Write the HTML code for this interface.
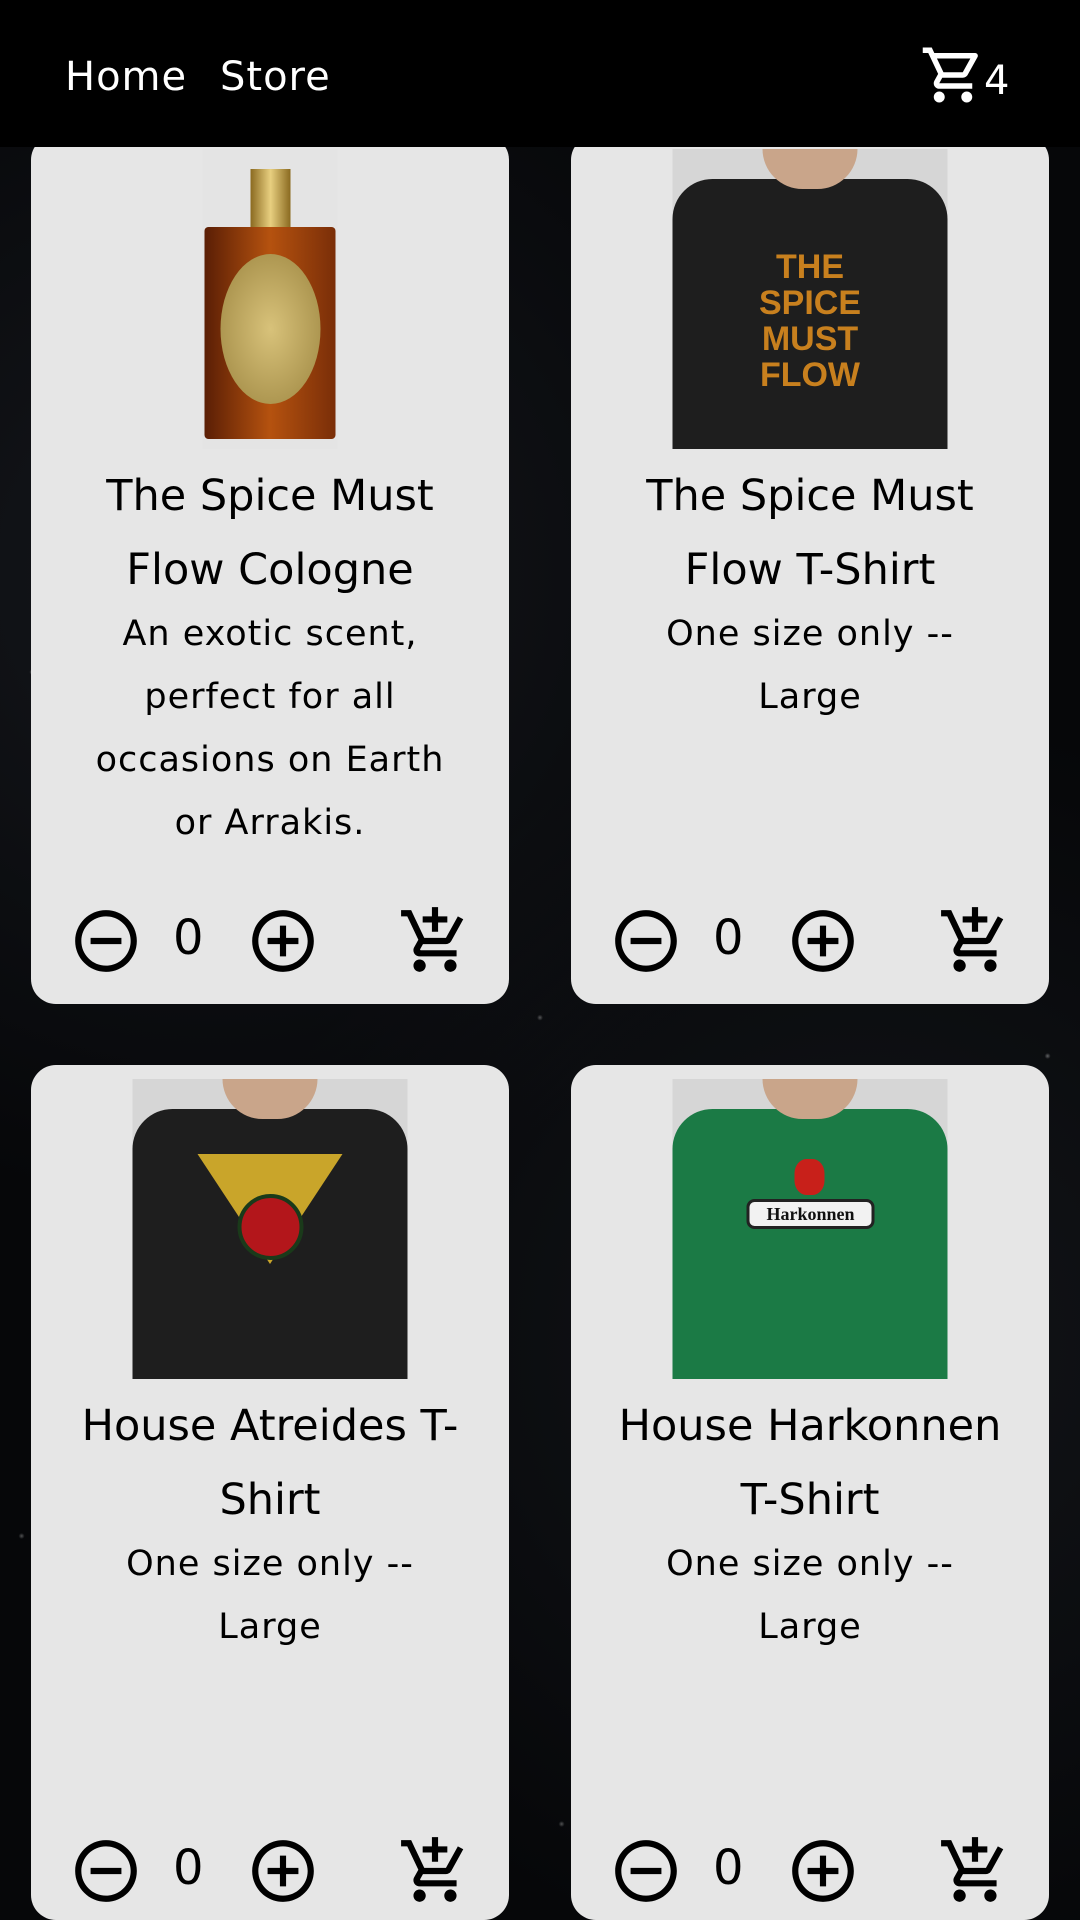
<!DOCTYPE html>
<html><head><meta charset="utf-8">
<style>
*{margin:0;padding:0;box-sizing:border-box}
html,body{width:1080px;height:1920px;overflow:hidden;background:#050608;font-family:"DejaVu Sans","Liberation Sans",sans-serif;color:#000;position:relative}
.stars{position:absolute;left:0;top:0;width:1080px;height:1920px;background:
radial-gradient(circle at 3% 35%,rgba(255,255,255,.35) 0,transparent 3px),
radial-gradient(circle at 97% 55%,rgba(255,255,255,.35) 0,transparent 3px),
radial-gradient(circle at 50% 53%,rgba(255,255,255,.3) 0,transparent 3px),
radial-gradient(circle at 52% 95%,rgba(255,255,255,.3) 0,transparent 3px),
radial-gradient(circle at 2% 80%,rgba(255,255,255,.3) 0,transparent 3px),
radial-gradient(circle at 20% 30%,#15171c 0,transparent 40%),
radial-gradient(circle at 80% 70%,#131519 0,transparent 40%),#060709}
.nav{position:absolute;left:0;top:0;width:1080px;height:147px;background:#000;z-index:5}
.nav a{position:absolute;top:54px;color:#fff;font-size:40px;text-decoration:none;letter-spacing:1px}
.card{position:absolute;width:478px;background:#e6e6e6;border-radius:25px;overflow:hidden}
.img{position:absolute;top:14px;left:50%;transform:translateX(-50%);width:275px;height:300px;background:#d6d6d6;overflow:hidden}
.t{position:absolute;left:0;width:100%;text-align:center;font-size:43px;line-height:74px;white-space:nowrap}
.d{position:absolute;left:0;width:100%;text-align:center;font-size:35px;line-height:63px;white-space:nowrap;letter-spacing:1px}
.ctl{position:absolute;left:0;width:100%;height:80px}
.ctl svg{position:absolute;top:0}
.ctl .n{position:absolute;left:142px;top:6px;font-size:48px}
</style></head><body>
<div class="stars"></div>
<div class="nav">
<a style="left:65px">Home</a><a style="left:220px">Store</a>
<svg style="position:absolute;left:920px;top:42px" width="66" height="66" viewBox="0 0 24 24"><path fill="#fff" d="M15.55 13c.75 0 1.41-.41 1.78-1.030l3.58-6.49A.996.996 0 0020.04 4H5.21l-.94-2H1v2h2l3.6 7.590-1.35 2.44C4.52 15.37 5.48 17 7 17h12v-2H7l1.1-2h7.45zM6.16 6h12.15l-2.76 5H8.53L6.16 6zM7 18c-1.1 0-1.99.9-1.99 2S5.9 22 7 22s2-.9 2-2-.9-2-2-2zm10 0c-1.1 0-1.99.9-1.99 2s.89 2 1.99 2 2-.9 2-2-.9-2-2-2z"/></svg>
<a style="left:984px;top:58px">4</a>
</div>

<svg width="0" height="0" style="position:absolute">
<defs>
<symbol id="minus" viewBox="0 0 24 24"><path d="M7 11v2h10v-2H7zm5-9C6.48 2 2 6.480 2 12s4.48 10 10 10 10-4.48 10-10S17.52 2 12 2zm0 18c-4.41 0-8-3.590-8-8s3.59-8 8-8 8 3.59 8 8-3.59 8-8 8z"/></symbol>
<symbol id="plus" viewBox="0 0 24 24"><path d="M13 7h-2v4H7v2h4v4h2v-4h4v-2h-4V7zm-1-5C6.48 2 2 6.48 2 12s4.48 10 10 10 10-4.48 10-10S17.52 2 12 2zm0 18c-4.41 0-8-3.59-8-8s3.59-8 8-8 8 3.59 8 8-3.59 8-8 8z"/></symbol>
<symbol id="cart" viewBox="0 0 24 24"><path d="M11 9h2V6h3V4h-3V1h-2v3H8v2h3v3zm-4 9c-1.1 0-1.99.9-1.99 2S5.9 22 7 22s2-.9 2-2-.9-2-2-2zm10 0c-1.1 0-1.99.9-1.99 2s.89 2 1.99 2 2-.9 2-2-.9-2-2-2zm-9.830-3.25l.03-.12.9-1.63h7.45c.75 0 1.41-.41 1.75-1.03l3.86-7.01L19.42 4h-.01l-1.1 2-2.76 5H8.53l-.13-.27L6.16 6l-.95-2-.94-2H1v2h2l3.6 7.59-1.35 2.450c-.16.28-.25.61-.25.96 0 1.1.9 2 2 2h12v-2H7.42c-.13 0-.25-.1-.25-.25z"/></symbol>
</defs></svg>

<div class="card" style="left:31px;top:135px;height:869px">
  <div class="img" style="width:135px;background:#e4e4e4">
    <div style="position:absolute;left:48px;top:20px;width:40px;height:58px;background:linear-gradient(90deg,#8a6a20,#e8cf80,#8a6a20)"></div>
    <div style="position:absolute;left:2px;top:78px;width:131px;height:212px;background:linear-gradient(90deg,#5a1e05,#b5520f,#7a2e08);border-radius:4px"></div>
    <div style="position:absolute;left:18px;top:105px;width:100px;height:150px;border-radius:50%;background:radial-gradient(#d8c27a,#9c8540)"></div>
  </div>
  <div class="t" style="top:324px">The Spice Must<br>Flow Cologne</div>
  <div class="d" style="top:468px">An exotic scent,<br>perfect for all<br>occasions on Earth<br>or Arrakis.</div>
  <div class="ctl" style="top:769px">
    <svg style="left:38px" width="74" height="74"><use href="#minus"/></svg>
    <div class="n">0</div>
    <svg style="left:215px" width="74" height="74"><use href="#plus"/></svg>
    <svg style="left:367px" width="74" height="74"><use href="#cart"/></svg>
  </div>
</div>

<div class="card" style="left:571px;top:135px;height:869px">
  <div class="img">
    <div style="position:absolute;left:0;top:30px;width:275px;height:270px;background:#1e1e1e;border-radius:40px 40px 0 0"></div>
    <div style="position:absolute;left:90px;top:0;width:95px;height:40px;background:#c9a58a;border-radius:0 0 50px 50px"></div>
    <div style="position:absolute;left:0;top:100px;width:275px;text-align:center;font:bold 34px/36px 'Liberation Sans',sans-serif;color:#c8801e">THE<br>SPICE<br>MUST<br>FLOW</div>
  </div>
  <div class="t" style="top:324px">The Spice Must<br>Flow T-Shirt</div>
  <div class="d" style="top:468px">One size only --<br>Large</div>
  <div class="ctl" style="top:769px">
    <svg style="left:38px" width="74" height="74"><use href="#minus"/></svg>
    <div class="n">0</div>
    <svg style="left:215px" width="74" height="74"><use href="#plus"/></svg>
    <svg style="left:367px" width="74" height="74"><use href="#cart"/></svg>
  </div>
</div>

<div class="card" style="left:31px;top:1065px;height:855px">
  <div class="img">
    <div style="position:absolute;left:0;top:30px;width:275px;height:270px;background:#1e1e1e;border-radius:40px 40px 0 0"></div>
    <div style="position:absolute;left:90px;top:0;width:95px;height:40px;background:#c9a58a;border-radius:0 0 50px 50px"></div>
    <div style="position:absolute;left:65px;top:75px;width:145px;height:110px;background:#c9a52a;clip-path:polygon(0 0,100% 0,50% 100%)"></div>
    <div style="position:absolute;left:105px;top:115px;width:66px;height:66px;border-radius:50%;background:#b3161b;border:4px solid #1a3a1a"></div>
  </div>
  <div class="t" style="top:324px">House Atreides T-<br>Shirt</div>
  <div class="d" style="top:468px">One size only --<br>Large</div>
  <div class="ctl" style="top:769px">
    <svg style="left:38px" width="74" height="74"><use href="#minus"/></svg>
    <div class="n">0</div>
    <svg style="left:215px" width="74" height="74"><use href="#plus"/></svg>
    <svg style="left:367px" width="74" height="74"><use href="#cart"/></svg>
  </div>
</div>

<div class="card" style="left:571px;top:1065px;height:855px">
  <div class="img">
    <div style="position:absolute;left:0;top:30px;width:275px;height:270px;background:#1b7a45;border-radius:40px 40px 0 0"></div>
    <div style="position:absolute;left:90px;top:0;width:95px;height:40px;background:#c9a58a;border-radius:0 0 50px 50px"></div>
    <div style="position:absolute;left:122px;top:80px;width:30px;height:36px;background:#c8201a;border-radius:40%"></div>
    <div style="position:absolute;left:74px;top:120px;width:128px;height:30px;background:#f2f2f2;border:3px solid #222;border-radius:8px;font:bold 18px/24px 'Liberation Serif',serif;text-align:center;color:#111">Harkonnen</div>
  </div>
  <div class="t" style="top:324px">House Harkonnen<br>T-Shirt</div>
  <div class="d" style="top:468px">One size only --<br>Large</div>
  <div class="ctl" style="top:769px">
    <svg style="left:38px" width="74" height="74"><use href="#minus"/></svg>
    <div class="n">0</div>
    <svg style="left:215px" width="74" height="74"><use href="#plus"/></svg>
    <svg style="left:367px" width="74" height="74"><use href="#cart"/></svg>
  </div>
</div>
</body></html>
